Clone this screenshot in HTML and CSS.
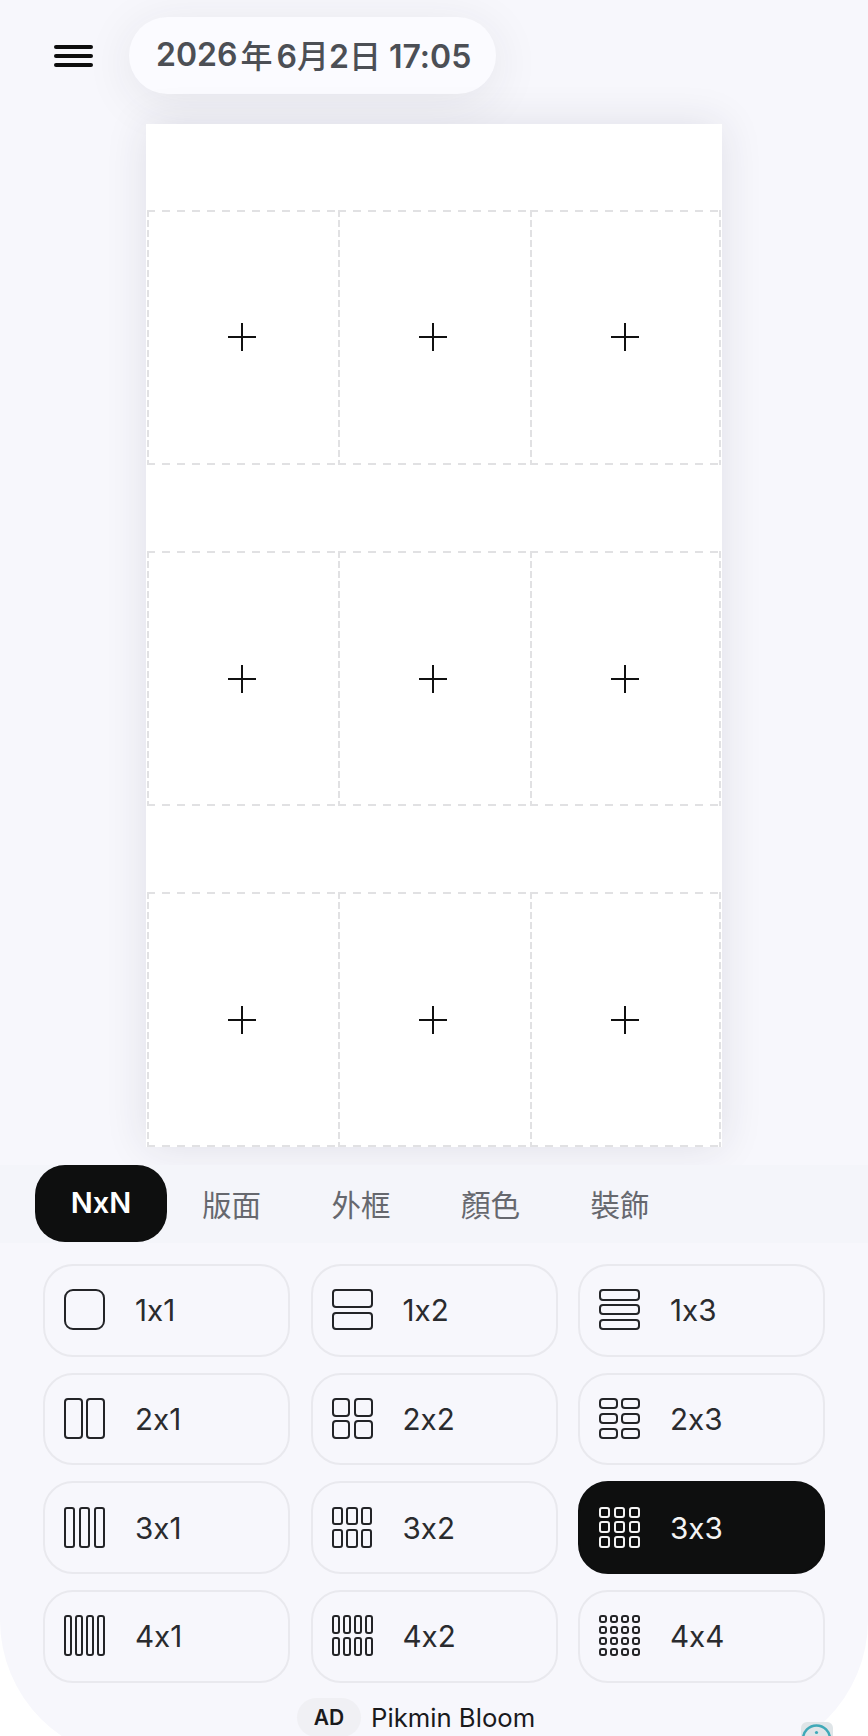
FILE: index.html
```html
<!DOCTYPE html>
<html lang="zh-Hant">
<head>
<meta charset="utf-8">
<title>NxN</title>
<link rel="stylesheet" href="styles.css">
</head>
<body>
<div class="app">
  <header class="top">
    <button class="menu" aria-label="menu"><span></span><span></span><span></span></button>
    <div class="date">2026<span class="sp">年</span>6月2日 17:05</div>
  </header>
  <main class="sheet">
    <div class="row"><div class="cell"><span class="plus"></span></div><div class="cell"><span class="plus"></span></div><div class="cell"><span class="plus"></span></div></div>
    <div class="row"><div class="cell"><span class="plus"></span></div><div class="cell"><span class="plus"></span></div><div class="cell"><span class="plus"></span></div></div>
    <div class="row"><div class="cell"><span class="plus"></span></div><div class="cell"><span class="plus"></span></div><div class="cell"><span class="plus"></span></div></div>
  </main>
  <nav class="tabs">
    <span class="tab active">NxN</span>
    <span class="tab">版面</span>
    <span class="tab">外框</span>
    <span class="tab">顏色</span>
    <span class="tab">裝飾</span>
  </nav>
  <section class="options">
    <div class="opt"><span class="ic c1 r1 solo"><i></i></span>1x1</div>
    <div class="opt"><span class="ic c1 r2"><i></i><i></i></span>1x2</div>
    <div class="opt"><span class="ic c1 r3"><i></i><i></i><i></i></span>1x3</div>
    <div class="opt"><span class="ic c2 r1"><i></i><i></i></span>2x1</div>
    <div class="opt"><span class="ic c2 r2"><i></i><i></i><i></i><i></i></span>2x2</div>
    <div class="opt"><span class="ic c2 r3"><i></i><i></i><i></i><i></i><i></i><i></i></span>2x3</div>
    <div class="opt"><span class="ic c3 r1"><i></i><i></i><i></i></span>3x1</div>
    <div class="opt"><span class="ic c3 r2"><i></i><i></i><i></i><i></i><i></i><i></i></span>3x2</div>
    <div class="opt selected"><span class="ic c3 r3"><i></i><i></i><i></i><i></i><i></i><i></i><i></i><i></i><i></i></span>3x3</div>
    <div class="opt"><span class="ic c4 r1"><i></i><i></i><i></i><i></i></span>4x1</div>
    <div class="opt"><span class="ic c4 r2"><i></i><i></i><i></i><i></i><i></i><i></i><i></i><i></i></span>4x2</div>
    <div class="opt"><span class="ic c4 r4"><i></i><i></i><i></i><i></i><i></i><i></i><i></i><i></i><i></i><i></i><i></i><i></i><i></i><i></i><i></i><i></i></span>4x4</div>
  </section>
  <footer class="ad">
    <span class="ad-badge">AD</span>
    <span class="ad-name">Pikmin Bloom</span>
    <span class="ad-info">
      <svg viewBox="0 0 32 32" width="32" height="32"><circle cx="15.5" cy="17" r="13.5" fill="none" stroke="#3fa9b8" stroke-width="2.5"/><circle cx="15.5" cy="10.5" r="1.6" fill="#3fa9b8"/></svg>
    </span>
  </footer>
</div>
</body>
</html>
```
FILE: styles.css
```css
* { box-sizing: border-box; }
html, body { margin: 0; height: 1736px; overflow: hidden; background: #fff; }
body {
  font-family: Inter, "Noto Sans CJK TC", sans-serif;
  font-feature-settings: "calt" 0;
}

.app {
  position: relative;
  width: 868px;
  height: 1760px;
  background: #f7f7fc;
  border-radius: 0 0 140px 140px;
  display: flex;
  flex-direction: column;
}

.top {
  display: flex;
  align-items: center;
  height: 77px;
  margin-top: 17px;
  padding-left: 54px;
}
.menu {
  display: flex;
  flex-direction: column;
  gap: 5px;
  width: 39px;
  padding: 0;
  border: 0;
  background: none;
}
.menu span { display: block; height: 4px; border-radius: 2px; background: #0d0d0d; }
.date {
  display: flex;
  align-items: center;
  height: 77px;
  width: 367px;
  margin-left: 36px;
  padding: 0 0 3px 27px;
  border-radius: 39px;
  background: #fbfbff;
  box-shadow: 0 8px 50px rgba(40, 40, 60, 0.09);
  color: #4c4f55;
  font-size: 32px;
  font-weight: 560;
  white-space: pre;
}
.sp { margin: 0 4px 0 3px; }

.sheet {
  align-self: center;
  width: 576px;
  height: 1023px;
  margin-top: 30px;
  padding: 86px 1px 0;
  background: #fff;
  box-shadow: 0 0 40px rgba(40, 40, 60, 0.11);
  display: flex;
  flex-direction: column;
  gap: 86.6px;
}
.row { display: grid; grid-template-columns: repeat(3, 1fr); height: 254.7px; }
.cell {
  display: flex;
  align-items: center;
  justify-content: center;
  background:
    repeating-linear-gradient(90deg, #e1e1e3 0 8px, transparent 8px 15px) left top / 100% 2px no-repeat,
    repeating-linear-gradient(90deg, #e1e1e3 0 8px, transparent 8px 15px) left bottom / 100% 2px no-repeat,
    repeating-linear-gradient(180deg, #e1e1e3 0 7px, transparent 7px 10px) left top / 2px 100% no-repeat;
}
.cell:last-child {
  background:
    repeating-linear-gradient(90deg, #e1e1e3 0 8px, transparent 8px 15px) left top / 100% 2px no-repeat,
    repeating-linear-gradient(90deg, #e1e1e3 0 8px, transparent 8px 15px) left bottom / 100% 2px no-repeat,
    repeating-linear-gradient(180deg, #e1e1e3 0 7px, transparent 7px 10px) left top / 2px 100% no-repeat,
    repeating-linear-gradient(180deg, #e1e1e3 0 7px, transparent 7px 10px) right top / 2px 100% no-repeat;
}
.plus {
  position: relative;
  width: 28px;
  height: 28px;
  margin-right: 1px;
}
.plus::before, .plus::after {
  content: "";
  position: absolute;
  background: #111;
}
.plus::before { left: 0; right: 0; top: 13px; height: 2px; }
.plus::after { top: 0; bottom: 0; left: 13px; width: 2px; }

.tabs {
  display: flex;
  align-items: center;
  height: 78px;
  margin-top: 18px;
  padding-left: 35px;
  background: #f4f5fa;
}
.tab {
  width: 130px;
  padding-bottom: 3px;
  text-align: center;
  color: #66686e;
  font-size: 29.5px;
  font-weight: 400;
  margin-left: -0.5px;
}
.tab.active {
  width: 132px;
  height: 77px;
  padding: 0;
  margin: 0 0 1px 0;
  line-height: 75px;
  border-radius: 30px;
  background: #0e0f0f;
  color: #fff;
  font-size: 29px;
  font-weight: 600;
}

.options {
  display: grid;
  grid-template-columns: repeat(3, 247px);
  grid-auto-rows: 92.5px;
  column-gap: 20.5px;
  row-gap: 16.2px;
  padding: 21px 0 0 43px;
}
.opt {
  display: flex;
  align-items: center;
  gap: 30px;
  padding-left: 19px;
  border: 2px solid #e9e9ee;
  border-radius: 30px;
  color: #2a2b2e;
  font-size: 29.6px;
}
.opt.selected {
  background: #0e0f0f;
  border-color: #0e0f0f;
  color: #f4f4f4;
}
.ic {
  display: grid;
  flex: none;
  width: 41px;
  height: 41px;
  gap: 3.5px;
  margin-top: -1px;
}
.ic i {
  display: block;
  border: 2px solid #232427;
  border-radius: 4px;
}
.selected .ic i { border-color: #f4f4f4; }
.solo i { border-radius: 9px; }
.c1 { grid-template-columns: 1fr; }
.c2 { grid-template-columns: repeat(2, 1fr); }
.c3 { grid-template-columns: repeat(3, 1fr); }
.c4 { grid-template-columns: repeat(4, 1fr); gap: 3px; }
.r1 { grid-template-rows: 1fr; }
.r2 { grid-template-rows: repeat(2, 1fr); }
.r3 { grid-template-rows: repeat(3, 1fr); }
.r4 { grid-template-rows: repeat(4, 1fr); }
.c3 i, .c4 i { border-radius: 3px; }

.ad {
  position: relative;
  display: flex;
  align-items: center;
  margin-top: 15.5px;
  padding-left: 297px;
  height: 39px;
}
.ad-badge {
  width: 64px;
  height: 39px;
  line-height: 39px;
  text-align: center;
  border-radius: 20px;
  background: #f0f0f4;
  color: #1a1a1c;
  font-size: 21px;
  font-weight: 600;
}
.ad-name {
  margin-left: 10px;
  color: #1a1a1c;
  font-size: 25.7px;
}
.ad-info {
  position: absolute;
  left: 801px;
  top: 24px;
  width: 32px;
  height: 32px;
  border-radius: 6px 6px 0 0;
  background: #dfe5e8;
}
```
